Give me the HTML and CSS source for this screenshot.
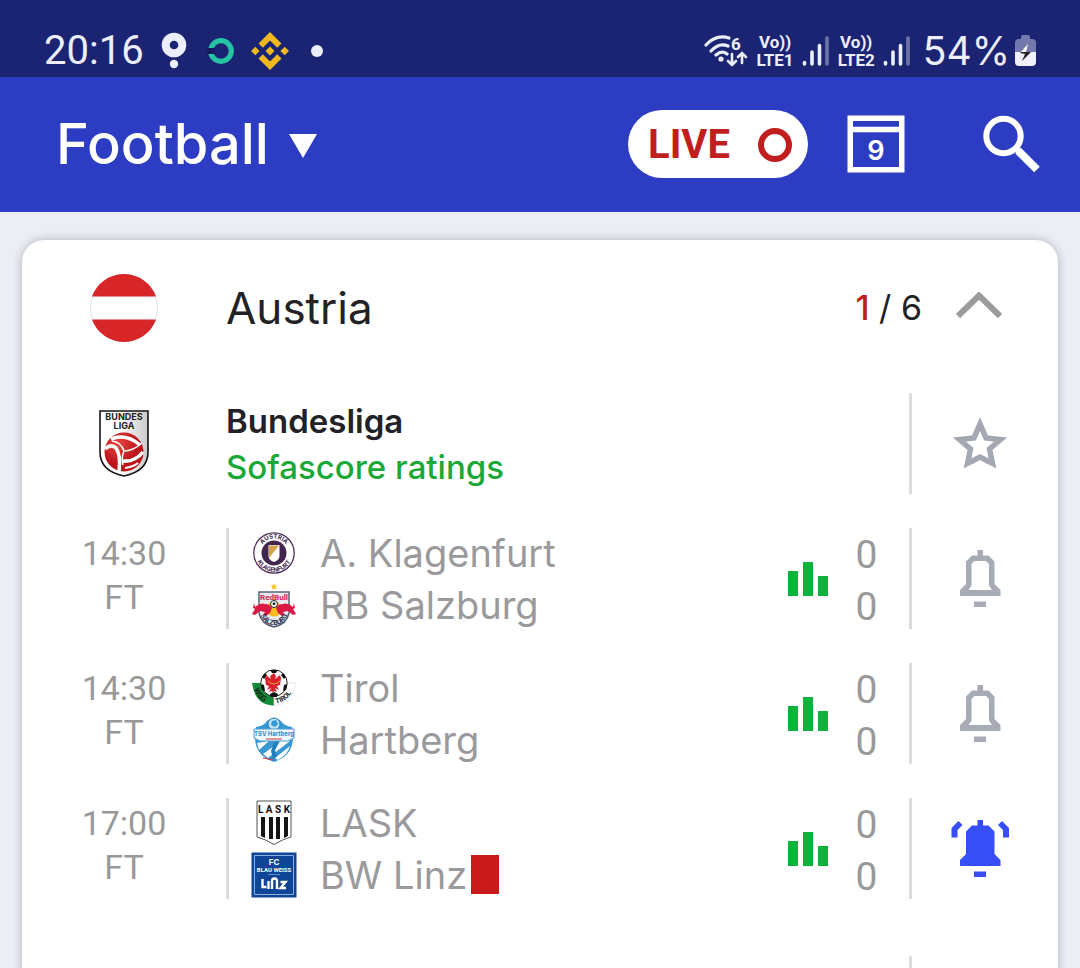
FILE: index.html
```html
<!DOCTYPE html>
<html lang="en">
<head>
<meta charset="utf-8">
<meta name="viewport" content="width=device-width, initial-scale=1">
<title>Football</title>
<link rel="stylesheet" href="styles.css">
</head>
<body>
<svg class="defs" aria-hidden="true">
  <symbol id="bars" viewBox="0 0 40 34"><path d="M0 9h10v25H0zM15 0h10v34H15zM30 14h10v20H30z"/></symbol>
  <symbol id="signal" viewBox="0 0 28 32">
    <g stroke-width="3.6" stroke-linecap="round" stroke="#eceefb"><path d="M2.500 27.500v1.500M10 17v12M17.500 10.500v18.500"/><path d="M25 3v26" opacity=".4"/></g>
  </symbol>
  <symbol id="bell" viewBox="0 0 58 58">
    <path fill-rule="evenodd" d="M26.500 0h5.500v5.500h5.500l6 6v22.500l6 6v6H9v-6l6-6V11.500l6-6h5.500zM23.500 11l-3 3v21.500l-3 4.500h23.500l-3-4.500V14l-3-3zM23 51.500h12v5.500H23z"/>
  </symbol>
  <symbol id="bell-on" viewBox="0 0 58 58">
    <path d="M26.500 0h5.500v5.500h5.500l6 6v22.500l6 6v6H9v-6l6-6V11.500l6-6h5.500zM23 51.500h12v5.500H23zM7.500 1l4 4-5 5v7.500H.5V8zM51 1l-4 4 5 5v7.500h6V8z"/>
  </symbol>
</svg>

<div class="app">
  <div class="status">
    <div class="status-side">
      <span class="clock">20:16</span>
      <svg width="26" height="38" viewBox="0 0 26 38"><circle cx="13" cy="13" r="8.300" fill="none" stroke="#eceefb" stroke-width="8"/><circle cx="13" cy="32" r="4.200" fill="#eceefb"/></svg>
      <svg width="30" height="28" viewBox="0 0 30 28"><circle cx="17" cy="14" r="10.300" fill="none" stroke="#25c4a4" stroke-width="5.200"/><path d="M3 11h8v6H3z" fill="#1a1a62"/></svg>
      <svg width="38" height="38" viewBox="0 0 38 38" fill="#efb81c"><path d="M19 0l11.500 11.500-4.300 4.300L19 8.600l-7.200 7.200-4.300-4.300zM19 38l11.500-11.500-4.300-4.300L19 29.400l-7.200-7.200-4.300 4.300zM4.300 14.700L8.600 19l-4.300 4.300L0 19zM33.700 14.700L38 19l-4.300 4.300-4.300-4.300zM19 14.500l4.500 4.500-4.500 4.500-4.500-4.500z"/></svg>
      <span class="dot"></span>
    </div>
    <div class="status-side status-right">
      <svg width="44" height="34" viewBox="0 0 44 34" fill="none" stroke="#eceefb" stroke-width="3.200" stroke-linecap="round"><path d="M2 11Q12 0 25 4M7 17q8-9 17-5M12 21q6-5 11-1"/><circle cx="17" cy="25" r="1" fill="#eceefb"/><path d="M28 20v11m-4-4l4 4 4-4M38 29V19m-4 4l4-4 4 4" stroke-width="2.600"/><text x="27" y="16" class="tiny-six">6</text></svg>
      <span class="volte"><span>Vo))</span><span>LTE1</span></span>
      <svg width="28" height="32"><use href="#signal"/></svg>
      <span class="volte"><span>Vo))</span><span>LTE2</span></span>
      <svg width="28" height="32"><use href="#signal"/></svg>
      <span class="battery-text">54%</span>
      <svg width="22" height="32" viewBox="0 0 22 32"><path d="M6 4V2q0-2 2-2h5q2 0 2 2v2h2q4 0 4 4v9H0V8q0-4 4-4z" fill="#7479ad"/><path d="M0 17h21v10q0 4-4 4H4q-4 0-4-4z" fill="#f0f1fc"/><path d="M13 9L5 18h5l1-1z" fill="#fff"/><path d="M5 18l1-1h10L7 26l3-7z" fill="#222"/></svg>
    </div>
  </div>

  <header class="topbar">
    <button class="sport" type="button">Football <svg width="28" height="24" viewBox="0 0 28 24"><path d="M0 0h28L14 24z" fill="#fff"/></svg></button>
    <div class="tools">
      <button class="live" type="button">LIVE <span class="ring"></span></button>
      <button class="icon-button" type="button" aria-label="Calendar"><svg width="58" height="58" viewBox="0 0 58 58"><path fill="none" stroke="#fff" stroke-width="5.500" d="M3.250 3.250h51.500v51.500H3.250zM3 14.500h52"/><text x="29" y="45" text-anchor="middle" class="day">9</text></svg></button>
      <button class="icon-button" type="button" aria-label="Search"><svg width="58" height="58" viewBox="0 0 58 58" fill="none" stroke="#fff"><circle cx="20.500" cy="21" r="17.200" stroke-width="6"/><path d="M32 32l5 5" stroke-width="5"/><path d="M35 35.500L54 54.500" stroke-width="8"/></svg></button>
    </div>
  </header>

  <main class="content">
    <section class="card">
      <div class="country">
        <div class="lead"><svg width="68" height="68" viewBox="0 0 68 68"><circle cx="34" cy="34" r="33.500" fill="#fff" stroke="#dedede"/><path d="M2 22.500a34 34 0 0 1 64 0zM2 45.500a34 34 0 0 0 64 0z" fill="#d82528"/></svg></div>
        <h1>Austria</h1>
        <span class="count"><b>1</b> / 6</span>
        <button class="action" type="button" aria-label="Collapse"><svg width="46" height="28" viewBox="0 0 46 28"><path d="M2 24L23 3.500 44 24" fill="none" stroke="#9b9b9b" stroke-width="6"/></svg></button>
      </div>

      <div class="league">
        <div class="lead">
          <svg width="50" height="67" viewBox="0 0 50 67">
            <defs><radialGradient id="ball" cx=".35" cy=".3"><stop offset="0" stop-color="#e8463f"/><stop offset="1" stop-color="#bd141b"/></radialGradient><linearGradient id="shield" x1="0" x2="1"><stop offset=".4" stop-color="#fff"/><stop offset="1" stop-color="#c9c9c9"/></linearGradient></defs>
            <path d="M1 1h48v41q0 19-24 24Q1 61 1 42z" fill="url(#shield)" stroke="#151515" stroke-width="1.600"/>
            <text x="25" y="10" text-anchor="middle" class="crest-bl">BUNDES</text><text x="25" y="19" text-anchor="middle" class="crest-bl">LIGA</text>
            <circle cx="25" cy="42" r="19.500" fill="url(#ball)"/>
            <g fill="none" stroke="#fff"><path d="M12 29q15-6 29 6" stroke-width="3.600"/><path d="M6 39q6-6 11-1 5 7 3 23" stroke-width="3.600"/><path d="M13 31q9 1 12 10 9 0 18-8" stroke-width="1.500"/><path d="M25 41q-3 7-1 14" stroke-width="1.500"/><path d="M24 51q12 1 20-9" stroke-width="3.600"/><path d="M26 58q8-1 13-5" stroke-width="2"/></g>
          </svg>
        </div>
        <div class="league-text"><h2>Bundesliga</h2><a href="#ratings">Sofascore ratings</a></div>
        <div class="rule"></div>
        <button class="action" type="button" aria-label="Favourite Bundesliga"><svg width="56" height="54" viewBox="0 0 56 54"><path d="M28 7l6 14 14.500 1.500L37.500 32l3 14.500L28 40l-12.500 6.500 3-14.500L7.500 22.500 22 21z" fill="none" stroke="#a3a8b3" stroke-width="5.500"/></svg></button>
      </div>

      <article class="match">
        <div class="time"><span>14:30</span><span>FT</span></div>
        <div class="rule"></div>
        <div class="teams">
          <div class="team">
            <svg width="46" height="46" viewBox="0 0 46 46"><circle cx="23" cy="23" r="20.200" fill="#fff" stroke="#4b2b56" stroke-width="1.300"/><circle cx="23" cy="23" r="12.500" fill="#42264d"/><path d="M17.500 15h11v11q0 4-5.500 6-5.500-2-5.500-6z" fill="#fff"/><path d="M18 15.500h10L18 28z" fill="#d5a24c"/><path id="k-top" d="M8.500 23a14.500 14.500 0 0 1 29 0" fill="none"/><path id="k-bottom" d="M4.200 23a18.800 18.800 0 0 0 37.600 0" fill="none"/><g class="crest-kl" text-anchor="middle"><text><textPath href="#k-top" startOffset="50%">AUSTRIA</textPath></text><text><textPath href="#k-bottom" startOffset="50%">KLAGENFURT</textPath></text></g></svg>
            <span>A. Klagenfurt</span>
          </div>
          <div class="team">
            <svg width="46" height="46" viewBox="0 0 46 46"><path d="M23 1l1 2.400 2.600.2-2 1.700.7 2.600-2.300-1.400-2.300 1.400.7-2.600-2-1.700 2.600-.2z" fill="#f3c52b"/><path d="M8 10h30v21q-2 11-15 14Q10 42 8 31z" fill="#e9eaee" stroke="#5b6277" stroke-width="1.500"/><circle cx="23" cy="27" r="7.500" fill="#f8bd19"/><path d="M3 21l1 4q5-5 10-3 5 0 7 4l-2 5-4 3-3-1 2-3-5-1-5 4-3-1 3-5-2-1zM43 21l-1 4q-5-5-10-3-5 0-7 4l2 5 4 3 3-1-2-3 5-1 5 4 3-1-3-5 2-1z" fill="#db1844"/><circle cx="23" cy="22" r="3.500" fill="#fff" stroke="#222"/><path d="M23 20l1.500 1.500-.5 1.500h-2l-.5-1.500z" fill="#222"/><text x="23" y="18" text-anchor="middle" class="crest-rb">RedBull</text><path id="rb-arc" d="M9 32q4 11 14 11t14-11" fill="none"/><text class="crest-sz" text-anchor="middle"><textPath href="#rb-arc" startOffset="50%">SALZBURG</textPath></text></svg>
            <span>RB Salzburg</span>
          </div>
        </div>
        <svg class="stats" width="40" height="34"><use href="#bars"/></svg>
        <div class="score"><span>0</span><span>0</span></div>
        <div class="rule"></div>
        <button class="action" type="button" aria-label="Notify"><svg width="58" height="58" fill="#a6abb5"><use href="#bell"/></svg></button>
      </article>

      <article class="match">
        <div class="time"><span>14:30</span><span>FT</span></div>
        <div class="rule"></div>
        <div class="teams">
          <div class="team">
            <svg width="46" height="46" viewBox="0 0 46 46"><path d="M1 18h22v22.500Q4 40 1 18z" fill="#148b3b"/><path d="M23 18h22q-3 22-22 22.500z" fill="#fff" stroke="#ddd" stroke-width=".6"/><circle cx="23" cy="18" r="13.200" fill="#fff" stroke="#222"/><path d="M19 5h8l-2 3h-4zM11 12l3-4 2 2-3 4zM35 12l-3-4-2 2 3 4zM10 19l3 1 1 6-3-1zM36 19l-3 1-1 6 3-1zM19 29l4-2 4 2-1 3h-6z" fill="#111"/><path d="M23 8l2 3-1 3 5-4 1 3-1 7-3 1 2 4-4-2 2 4-3-1-1 2-1-2-3 1 2-4-4 2 2-4-3-1-1-7 1-3 5 4-1-3z" fill="#d9212b"/><path d="M17 16q6 6 12 0" stroke="#e5a738" fill="none"/><path id="t-left" d="M3 24q4 14 18 14.500" fill="none"/><path id="t-right" d="M25 38.500Q38 37 44 20" fill="none"/><text class="crest-ti"><textPath href="#t-left">WSG</textPath></text><text class="crest-tr"><textPath href="#t-right">TIROL</textPath></text></svg>
            <span>Tirol</span>
          </div>
          <div class="team">
            <svg width="46" height="46" viewBox="0 0 46 46"><path d="M5 10q8-1 11-6 7-6 14 0 3 5 11 6l1 12q-1 17-19 23Q5 39 4 22z" fill="#3797d3"/><circle cx="23" cy="7" r="6" fill="#bde3f5" stroke="#247fb9"/><path d="M21 4l4-1 2 4-3 3-4-2z" fill="#3797d3"/><path d="M6 26l12-2L8 33zM30 24h9L17 41l-5-4zM39 29q-2 8-12 14l-3-2z" fill="#fff"/><path d="M25 22l3 4-4 7 2 6-4 3-2-8 2-6z" fill="#227fb9"/><path d="M3 12h40v9l-6 3H9l-6-3z" fill="#eef9ff" stroke="#4a9fd4"/><text x="23" y="18.500" text-anchor="middle" class="crest-ha">TSV Hartberg</text><path d="M15 22h16M12 41l10 2" stroke="#d32f38"/></svg>
            <span>Hartberg</span>
          </div>
        </div>
        <svg class="stats" width="40" height="34"><use href="#bars"/></svg>
        <div class="score"><span>0</span><span>0</span></div>
        <div class="rule"></div>
        <button class="action" type="button" aria-label="Notify"><svg width="58" height="58" fill="#a6abb5"><use href="#bell"/></svg></button>
      </article>

      <article class="match">
        <div class="time"><span>17:00</span><span>FT</span></div>
        <div class="rule"></div>
        <div class="teams">
          <div class="team">
            <svg width="46" height="46" viewBox="0 0 46 46"><path d="M6 1h34v36q-8 2-17 7.500Q14 39 6 37z" fill="#fff" stroke="#555"/><path d="M10 17h4v21l-4-2zM18 17h4v22h-4zM25 17h4v22h-4zM33 17h4v19l-4 2z" fill="#151515"/><text x="23" y="13" text-anchor="middle" class="crest-la">L A S K</text></svg>
            <span>LASK</span>
          </div>
          <div class="team">
            <svg width="46" height="46" viewBox="0 0 46 46"><path d="M.5.500h45v45H.5z" fill="#0e4596"/><path d="M3.500 3.500h39v39h-39z" fill="none" stroke="#8eafe0"/><g fill="#fff" text-anchor="middle"><text x="23" y="13" class="crest-fc">FC</text><text x="23" y="20" class="crest-bw">BLAU WEISS</text></g><path d="M17 22.500h12" stroke="#5f89c8"/><path d="M11.500 27v8h4M17.500 29v8M21 37v-8q0-2.500 2.500-2.500t2.500 2.500v8M29.500 30h5l-5 6h5.500" fill="none" stroke="#fff" stroke-width="2.400"/></svg>
            <span>BW Linz</span><span class="red-card"></span>
          </div>
        </div>
        <svg class="stats" width="40" height="34"><use href="#bars"/></svg>
        <div class="score"><span>0</span><span>0</span></div>
        <div class="rule"></div>
        <button class="action" type="button" aria-label="Notifications on"><svg width="58" height="58" fill="#374df5"><use href="#bell-on"/></svg></button>
      </article>

      <div class="league next">
        <div class="lead"></div><div class="league-text"></div><div class="rule"></div><div class="action"></div>
      </div>
    </section>
  </main>
</div>
</body>
</html>
```
FILE: styles.css
```css
* { box-sizing: border-box; }
body { margin: 0; font-family: Inter, Roboto, sans-serif; background: #ebeef4; color: #222226; }
button { border: 0; padding: 0; background: none; font: inherit; color: inherit; cursor: pointer; }
svg { display: block; flex: none; }
h1, h2 { margin: 0; }
.defs { position: absolute; width: 0; height: 0; }

.app { display: flex; flex-direction: column; height: 100vh; overflow: hidden; }

.status { display: flex; justify-content: space-between; height: 77px; flex: none; padding: 24px 43px 0 44px; background: #1b2473; color: #eceefb; }
.status-side { display: flex; align-items: center; height: 53px; gap: 17px; }
.clock { font-family: Roboto, sans-serif; font-size: 40px; line-height: 48px; }
.battery-text { margin: 0 -3px 0 4px; font-size: 39px; line-height: 48px; }
.dot { width: 12px; height: 12px; margin-left: 5px; border-radius: 50%; background: #eceefb; }
.status-right { gap: 8px; }
.volte { display: flex; flex-direction: column; align-items: center; font-family: Roboto, sans-serif; font-size: 17px; line-height: 18px; font-weight: 700; }
.tiny-six { font: 700 17px Roboto, sans-serif; fill: #eceefb; stroke: none; }

.topbar { display: flex; justify-content: space-between; align-items: center; height: 135px; flex: none; padding: 0 39px 2px 56px; background: #2c3dc3; color: #fff; }
.sport { display: flex; align-items: center; gap: 20px; font-size: 56px; line-height: 64px; font-weight: 500; }
.sport svg { margin-top: 4px; }
.tools { display: flex; align-items: center; }
.live { display: flex; align-items: center; justify-content: space-between; width: 180px; height: 68px; margin-right: 39px; padding: 2px 16px 0 20px; border-radius: 34px; background: #fff; color: #c01f1e; font-family: Roboto, sans-serif; font-size: 40px; font-weight: 700; }
.ring { width: 34px; height: 34px; border: 6px solid #c01f1e; border-radius: 50%; }
.icon-button + .icon-button { margin-left: 78px; }
.day { font: 600 27px Inter, sans-serif; fill: #fff; }

.content { flex: 1; min-height: 0; padding: 28px 22px 0; }
.card { border-radius: 22px; background: #fff; box-shadow: 0 0 10px rgba(60, 70, 95, .35); }
.country, .league, .match { display: flex; align-items: center; height: 135px; }
.country { height: 136px; }
.lead, .time { display: flex; flex-direction: column; align-items: center; flex: none; width: 204px; }
.country h1 { flex: 1; font-size: 44px; line-height: 56px; font-weight: 400; }
.count { font-size: 34px; line-height: 44px; }
.count b { color: #c01f1e; font-weight: 500; }
.action { display: flex; justify-content: center; flex: none; width: 136px; margin-right: 10px; }
.country .action { width: 114px; margin-right: 22px; }
.country .action svg { margin-bottom: 4px; }
.league-text { flex: 1; }
.league-text h2, .league-text a { display: block; font-size: 33px; line-height: 46px; font-weight: 600; }
.league-text a { color: #1aa838; font-weight: 500; text-decoration: none; }
.rule { flex: none; width: 3px; height: 101px; background: #dcdcdc; }
.time { padding-bottom: 8px; color: #999; font-family: Roboto, sans-serif; font-size: 34px; line-height: 44px; }
.teams { flex: 1; padding-left: 22px; color: #9a9a9c; }
.team { display: flex; align-items: center; height: 52px; font-size: 38px; line-height: 52px; }
.team > svg { margin-right: 23px; }
.red-card { width: 28px; height: 39px; margin-left: 4px; background: #ca1a1b; }
.stats { fill: #0bb23c; }
.score { display: flex; flex-direction: column; align-items: center; width: 81px; padding: 4px 4px 0 0; color: #999; font-family: Roboto, sans-serif; font-size: 39px; line-height: 52px; }
.next { margin-top: 23px; }

.crest-bl { font: 700 9px Inter, sans-serif; fill: #222; }
.crest-kl { font: 700 6px Inter, sans-serif; fill: #42264d; }
.crest-rb { font: 700 8px Roboto, sans-serif; fill: #d41f48; }
.crest-sz { font: 700 7px Roboto, sans-serif; fill: #27304e; }
.crest-ti { font: 700 8px Roboto, sans-serif; fill: #0a2b14; }
.crest-tr { font: 700 7px Roboto, sans-serif; fill: #222; }
.crest-ha { font: 700 6px Inter, sans-serif; fill: #2b88c4; }
.crest-la { font: 700 10px Roboto, sans-serif; fill: #111; }
.crest-fc { font: 700 8px Inter, sans-serif; }
.crest-bw { font: 700 6px Roboto, sans-serif; }
```
